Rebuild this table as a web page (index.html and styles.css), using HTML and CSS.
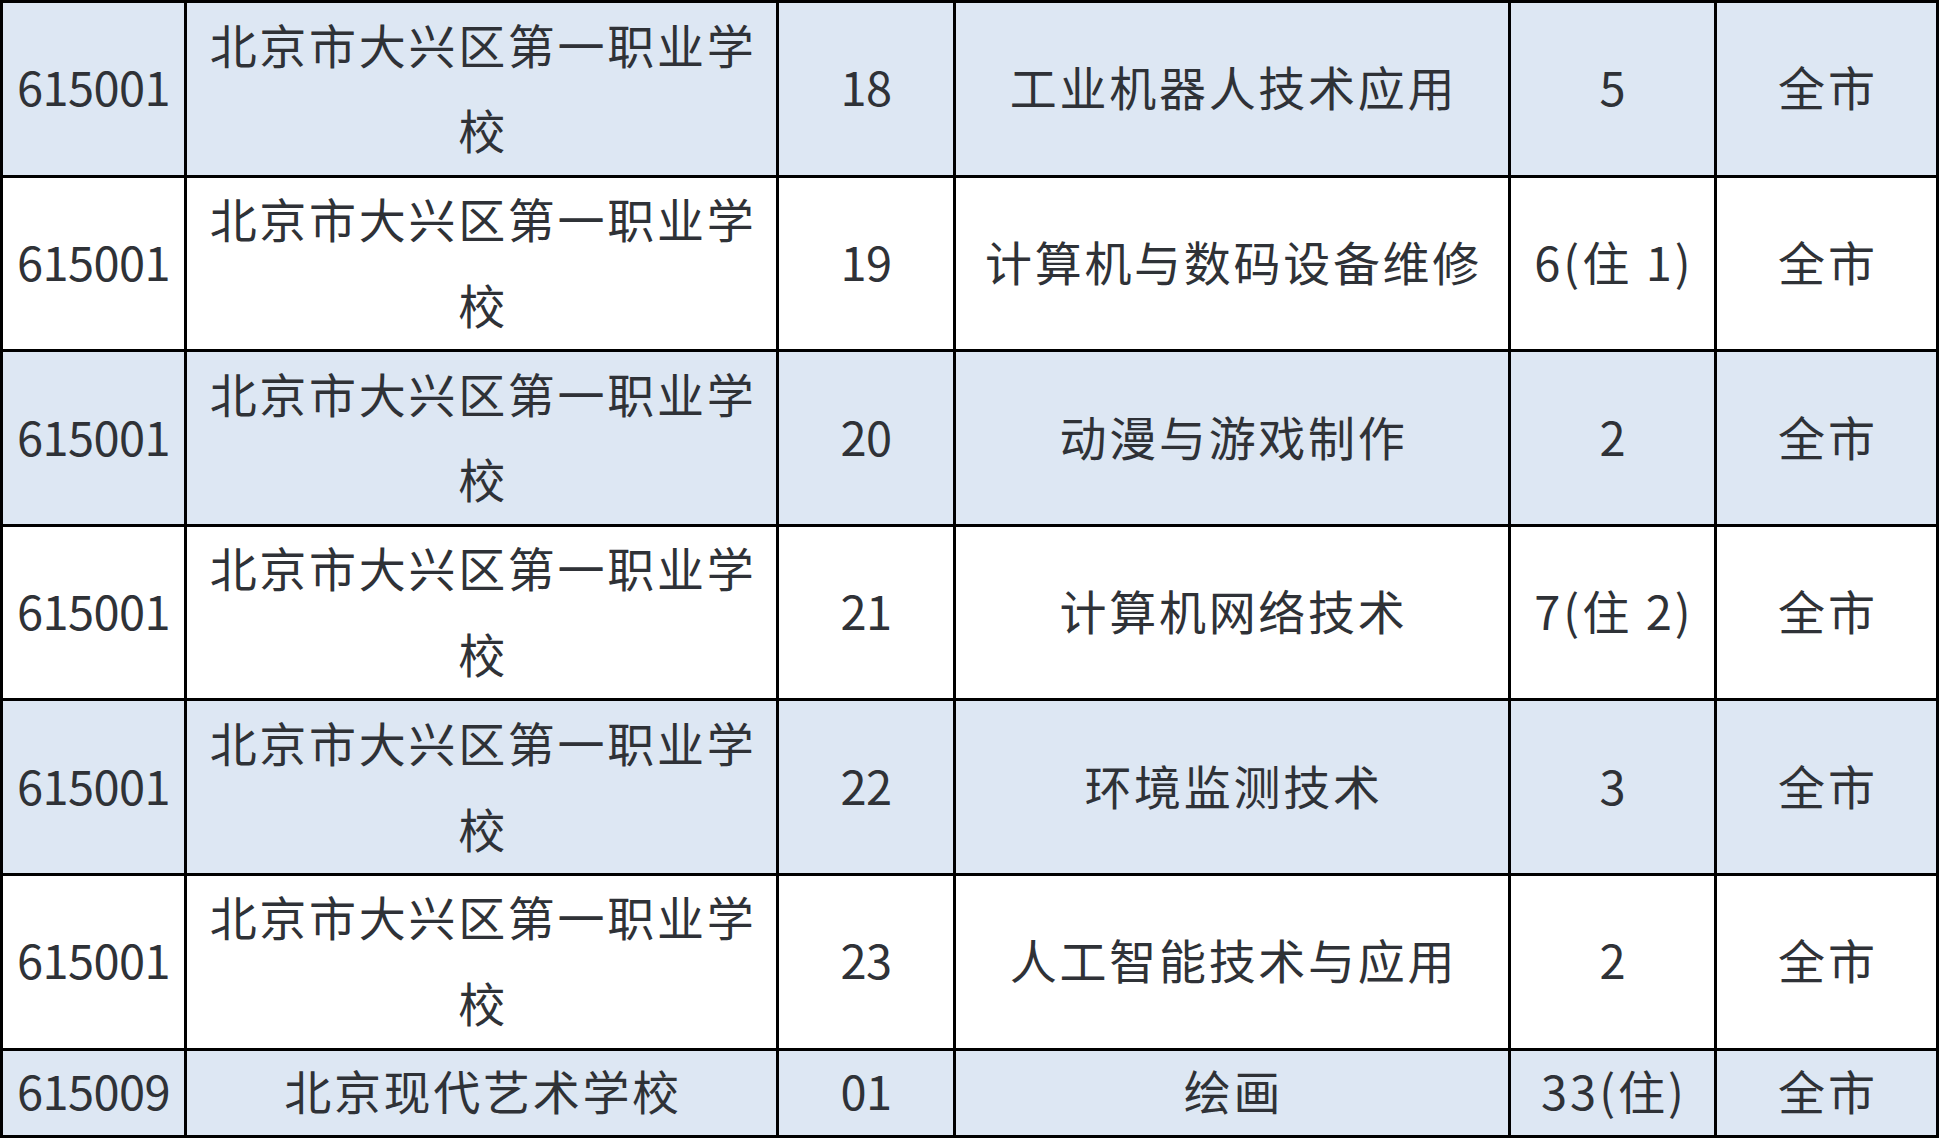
FILE: index.html
```html
<!DOCTYPE html>
<html lang="zh-CN">
<head>
<meta charset="utf-8">
<title>招生计划表</title>
<link rel="stylesheet" href="styles.css">
</head>
<body>
<div class="sheet" role="table">
  <div class="cell code blue">615001</div>
  <div class="cell school blue">北京市大兴区第一职业学校</div>
  <div class="cell num blue">18</div>
  <div class="cell major blue">工业机器人技术应用</div>
  <div class="cell plan blue">5</div>
  <div class="cell area blue">全市</div>

  <div class="cell code">615001</div>
  <div class="cell school">北京市大兴区第一职业学校</div>
  <div class="cell num">19</div>
  <div class="cell major">计算机与数码设备维修</div>
  <div class="cell plan">6(住 1)</div>
  <div class="cell area">全市</div>

  <div class="cell code blue">615001</div>
  <div class="cell school blue">北京市大兴区第一职业学校</div>
  <div class="cell num blue">20</div>
  <div class="cell major blue">动漫与游戏制作</div>
  <div class="cell plan blue">2</div>
  <div class="cell area blue">全市</div>

  <div class="cell code">615001</div>
  <div class="cell school">北京市大兴区第一职业学校</div>
  <div class="cell num">21</div>
  <div class="cell major">计算机网络技术</div>
  <div class="cell plan">7(住 2)</div>
  <div class="cell area">全市</div>

  <div class="cell code blue">615001</div>
  <div class="cell school blue">北京市大兴区第一职业学校</div>
  <div class="cell num blue">22</div>
  <div class="cell major blue">环境监测技术</div>
  <div class="cell plan blue">3</div>
  <div class="cell area blue">全市</div>

  <div class="cell code">615001</div>
  <div class="cell school">北京市大兴区第一职业学校</div>
  <div class="cell num">23</div>
  <div class="cell major">人工智能技术与应用</div>
  <div class="cell plan">2</div>
  <div class="cell area">全市</div>

  <div class="cell code blue">615009</div>
  <div class="cell school short blue">北京现代艺术学校</div>
  <div class="cell num blue">01</div>
  <div class="cell major blue">绘画</div>
  <div class="cell plan blue">33(住)</div>
  <div class="cell area blue">全市</div>
</div>
</body>
</html>
```

FILE: styles.css
```css
html, body {
  margin: 0;
  padding: 0;
  background: #ffffff;
  overflow: hidden;
}

.sheet {
  display: grid;
  grid-template-columns: 184px 592px 177px 555px 206px 222px;
  grid-template-rows: repeat(6, 174.6px) 87.4px;
  width: 1939px;
  box-sizing: border-box;
  border-top: 3px solid #000;
  border-left: 3px solid #000;
  font-family: "Noto Sans CJK SC", "Noto Sans", sans-serif;
  font-size: 47px;
  color: #2f3237;
}

.cell {
  box-sizing: border-box;
  border-right: 3px solid #000;
  border-bottom: 3px solid #000;
  display: flex;
  align-items: center;
  justify-content: center;
  text-align: center;
  line-height: 85.8px;
  padding-bottom: 5px;
  background: #ffffff;
}

.cell.blue {
  background: #dde7f3;
}

.code {
  letter-spacing: -0.6px;
}

.school {
  letter-spacing: 2.7px;
  padding-left: 15px;
  padding-right: 12px;
}

.school.short {
  letter-spacing: 2.7px;
  padding-left: 3px;
  padding-right: 0;
}

.num {
  letter-spacing: -0.5px;
}

.major {
  letter-spacing: 2.7px;
  padding-left: 3px;
}

.plan {
  letter-spacing: 3px;
  padding-left: 3px;
}

.area {
  letter-spacing: 3px;
  padding-left: 3px;
}
```
